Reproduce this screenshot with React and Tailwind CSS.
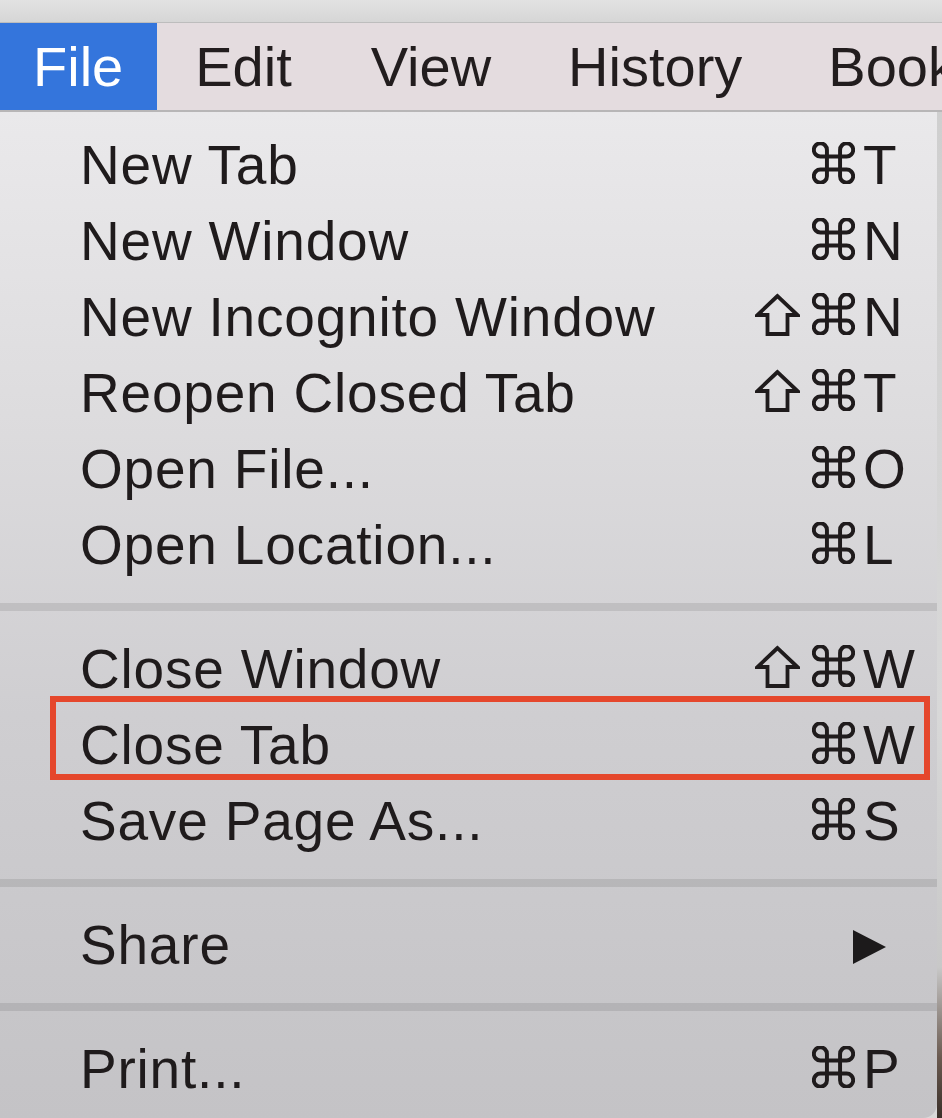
import React from "react";

const CmdIcon = () => (
  <svg width="43" height="42" viewBox="2.4 2.4 19.2 19.2" fill="none" stroke="#1f1b1c" strokeWidth="1.8" strokeLinecap="round" strokeLinejoin="round" className="inline-block">
    <path d="M15 6v12a3 3 0 1 0 3-3H6a3 3 0 1 0 3 3V6a3 3 0 1 0-3 3h12a3 3 0 1 0-3-3" />
  </svg>
);

const ShiftIcon = () => (
  <svg width="45" height="43" viewBox="0 0 45 43" fill="none" stroke="#1f1b1c" strokeWidth="3.8" strokeLinejoin="miter" className="inline-block">
    <path d="M22.5 3 L2.5 22 H12.5 V41 H32.5 V22 H42.5 Z" />
  </svg>
);

const Row = ({ label, shift, cmd, k, arrow, highlight }) => (
  <div className="relative flex h-[76px] items-baseline pl-[80px] pr-[14px] leading-[76px]">
    <span className="flex-1 tracking-[0.8px]">{label}</span>
    {arrow ? (
      <span className="flex h-[76px] w-[128px] items-center justify-start pl-[57px]">
        <svg width="34" height="34" viewBox="0 0 34 34">
          <polygon points="1,0 34,17 1,34" fill="#1c1a1b" />
        </svg>
      </span>
    ) : (
      <>
        <span className="flex w-[130px] justify-end gap-[12px]">
          {shift && <ShiftIcon />}
          {cmd && <CmdIcon />}
        </span>
        <span className="ml-[8px] w-[60px]">{k}</span>
      </>
    )}
    {highlight && (
      <div className="pointer-events-none absolute left-[50px] top-[-11px] h-[84px] w-[880px] border-[6px] border-[#e5472c]" />
    )}
  </div>
);

const Sep = () => <div className="my-[20px] h-[8px] bg-[rgba(0,0,0,0.095)]" />;

export default function App() {
  return (
    <div
      className="h-[1118px] w-[942px] overflow-hidden bg-[#d9d9d9] text-[#1f1b1c]"
      style={{ fontFamily: '"Liberation Sans", Arial, Helvetica, sans-serif' }}
    >
      <div className="h-[23px] border-b border-[#bdbdbd] bg-[linear-gradient(180deg,#e2e2e2_0%,#d6d6d6_100%)]" />
      <div className="flex h-[89px] items-stretch overflow-hidden whitespace-nowrap border-b-[2px] border-[#b8b6b7] bg-[#e4dcdf] text-[56px] leading-[87px] text-[#221d1e]">
        <div className="bg-[#3475dc] pl-[33px] pr-[34px] text-white">File</div>
        <div className="pl-[38px] pr-[39px]">Edit</div>
        <div className="pl-[40px] pr-[38px]">View</div>
        <div className="pl-[39px] pr-[43px]">History</div>
        <div className="pl-[43px] pr-[38px]">Bookmarks</div>
      </div>
      <div className="flex h-[1006px]">
        <div className="w-[937px] shrink-0 rounded-br-[14px] bg-[linear-gradient(180deg,#eae9eb_0%,#dddcde_30%,#cfced1_60%,#c4c3c6_100%)] pb-[10px] pt-[15px] text-[55px]">
          <Row label="New Tab" cmd k="T" />
          <Row label="New Window" cmd k="N" />
          <Row label="New Incognito Window" shift cmd k="N" />
          <Row label="Reopen Closed Tab" shift cmd k="T" />
          <Row label="Open File..." cmd k="O" />
          <Row label="Open Location..." cmd k="L" />
          <Sep />
          <Row label="Close Window" shift cmd k="W" />
          <Row label="Close Tab" cmd k="W" highlight />
          <Row label="Save Page As..." cmd k="S" />
          <Sep />
          <Row label="Share" arrow />
          <Sep />
          <Row label="Print..." cmd k="P" />
        </div>
        <div className="flex-1 bg-[linear-gradient(180deg,#cfcfcf_0%,#d8d8d8_60%,#c8c8c8_85%,#6a5a50_94%,#3a302a_100%)]" />
      </div>
    </div>
  );
}
